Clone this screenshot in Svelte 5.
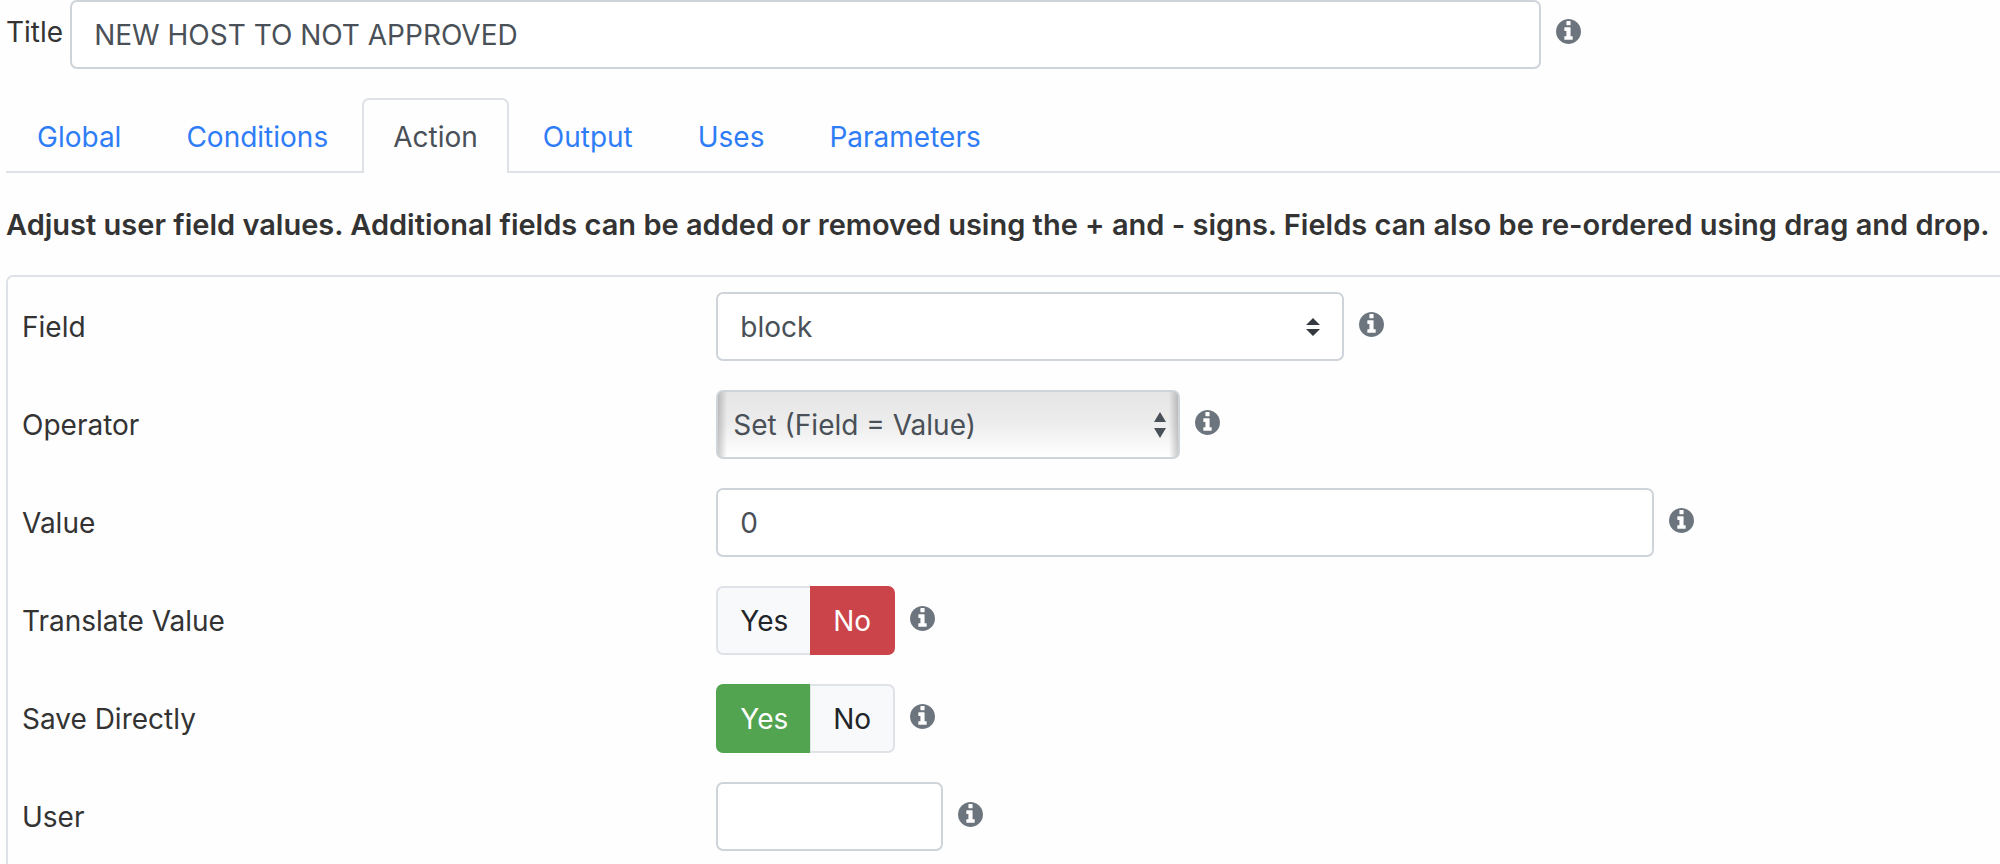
<script>
	let title = "NEW HOST TO NOT APPROVED";
	let activeTab = "Action";

	const tabs = ["Global", "Conditions", "Action", "Output", "Uses", "Parameters"];

	const rows = [
		{ id: "field", label: "Field", type: "select", value: "block" },
		{ id: "operator", label: "Operator", type: "menu", value: "Set (Field = Value)" },
		{ id: "value", label: "Value", type: "text", value: "0" },
		{ id: "translate", label: "Translate Value", type: "toggle", value: "No" },
		{ id: "save", label: "Save Directly", type: "toggle", value: "Yes" },
		{ id: "user", label: "User", type: "short", value: "" },
	];
</script>

{#snippet info()}
	<svg class="info" viewBox="0 128 1536 1536" aria-hidden="true">
		<path
			d="M1024 1376v-160q0-14-9-23t-23-9h-96v-512q0-14-9-23t-23-9h-320q-14 0-23 9t-9 23v160q0 14 9 23t23 9h96v320h-96q-14 0-23 9t-9 23v160q0 14 9 23t23 9h448q14 0 23-9t9-23zm-128-896v-192q0-14-9-23t-23-9h-192q-14 0-23 9t-9 23v192q0 14 9 23t23 9h192q14 0 23-9t9-23zm640 416q0 209-103 385.500t-279.500 279.500-385.500 103-385.500-103-279.500-279.500-103-385.500 103-385.500 279.500-279.500 385.500-103 385.500 103 279.500 279.500 103 385.500z" />
	</svg>
{/snippet}

<main>
	<div class="title-row">
		<label for="title">Title</label>
		<input id="title" class="control" type="text" bind:value={title} />
		{@render info()}
	</div>

	<nav class="tabs">
		{#each tabs as tab}
			<a
				href="#{tab.toLowerCase()}"
				class="tab"
				class:active={tab === activeTab}
				on:click|preventDefault={() => (activeTab = tab)}>{tab}</a>
		{/each}
	</nav>

	<p class="intro">
		Adjust user field values. Additional fields can be added or removed using the + and - signs. Fields can also be re-ordered using drag and drop.
	</p>

	<form class="panel">
		{#each rows as row}
			<div class="row">
				{#if row.type === "toggle"}
					<span id="{row.id}-label">{row.label}</span>
				{:else}
					<label for={row.id}>{row.label}</label>
				{/if}
				<div class="cell">
					{#if row.type === "select" || row.type === "menu"}
						<div class="picker {row.type}">
							<select id={row.id} class="control" bind:value={row.value}>
								<option>{row.value}</option>
							</select>
							{#if row.type === "select"}
								<svg class="arrows" viewBox="0 0 14 18" aria-hidden="true">
									<path d="M7 0L14 7H0zM7 18L0 11h14z" />
								</svg>
							{:else}
								<svg class="arrows" viewBox="0 0 14 26" aria-hidden="true">
									<path d="M7 0L13 10H1zM7 26L1 16h12z" />
								</svg>
							{/if}
						</div>
					{:else if row.type === "toggle"}
						<div class="toggle" role="radiogroup" aria-labelledby="{row.id}-label">
							{#each ["Yes", "No"] as option}
								<input
									type="radio"
									id="{row.id}-{option}"
									name={row.id}
									value={option}
									bind:group={row.value} />
								<label class={option.toLowerCase()} for="{row.id}-{option}">{option}</label>
							{/each}
						</div>
					{:else}
						<input id={row.id} class="control {row.type}" type="text" bind:value={row.value} />
					{/if}
					{@render info()}
				</div>
			</div>
		{/each}
	</form>
</main>

<style>
	:global(body) {
		background: #fefefe;
		overflow: hidden;
	}

	main {
		padding-left: 6px;
		color: #333;
		font: 28px/42px Inter, "Liberation Sans", sans-serif;
	}

	.title-row,
	.cell {
		display: flex;
		align-items: center;
	}

	.title-row label {
		margin-right: 7px;
		padding-bottom: 6px;
	}

	.title-row .control {
		flex: 0 1 1471px;
	}

	.title-row .info {
		margin-bottom: 6px;
	}

	.control {
		box-sizing: border-box;
		height: 69px;
		min-width: 0;
		margin: 0;
		padding: 0 22px;
		border: 2px solid #ced4da;
		border-radius: 7px;
		background: #fff;
		color: #495057;
		font: inherit;
	}

	.info {
		flex: none;
		width: 25px;
		height: 25px;
		margin: 0 0 4px 15px;
		fill: #6c757d;
	}

	.tabs {
		display: flex;
		gap: 3px;
		margin-top: 29px;
		border-bottom: 2px solid #dee2e6;
	}

	.tab {
		margin-bottom: -2px;
		padding: 16px 29px 15px;
		border: 2px solid transparent;
		border-bottom: 0;
		border-radius: 7px 7px 0 0;
		color: #2f7df6;
		text-decoration: none;
	}

	.tab.active {
		border-color: #dee2e6;
		background: #fefefe;
		color: #495057;
	}

	.intro {
		margin: 31px 0 29px;
		font-size: 29px;
		font-weight: 600;
		white-space: nowrap;
	}

	.panel {
		padding: 15px 0 14px 14px;
		border: 2px solid #dee2e6;
		border-right: 0;
		border-radius: 7px 0 0 7px;
	}

	.row {
		display: grid;
		grid-template-columns: 35% 1fr;
		column-gap: 2px;
		align-items: center;
		margin-bottom: 29px;
	}

	.picker {
		position: relative;
	}

	.picker .control {
		display: block;
		width: 100%;
		appearance: none;
	}

	.select {
		width: 628px;
	}

	.menu {
		width: 464px;
	}

	.menu .control {
		padding: 0 15px;
		background:
			linear-gradient(90deg, #0003, #0000 9px calc(100% - 9px), #0003),
			linear-gradient(#e5e5e5, #ededed 50%, #fff);
	}

	.arrows {
		position: absolute;
		top: 50%;
		right: 24px;
		width: 14px;
		transform: translateY(-50%);
		fill: #343a40;
		pointer-events: none;
	}

	.menu .arrows {
		right: 13px;
		fill: #495057;
	}

	.text {
		width: 938px;
	}

	.short {
		width: 227px;
	}

	.toggle {
		display: flex;
	}

	.toggle input {
		position: absolute;
		opacity: 0;
	}

	.toggle label {
		box-sizing: border-box;
		height: 69px;
		padding: 12px 22px;
		border: 2px solid #dfe2e6;
		background: #f8f9fa;
		color: #212529;
	}

	.toggle .yes {
		border-right-width: 0;
		border-radius: 7px 0 0 7px;
	}

	.toggle .no {
		border-left-width: 1px;
		border-radius: 0 7px 7px 0;
	}

	.toggle input:checked + .yes {
		border-color: #53a451;
		background: #53a451;
		color: #fff;
	}

	.toggle input:checked + .no {
		border-color: #cb444a;
		background: #cb444a;
		color: #fff;
	}
</style>
